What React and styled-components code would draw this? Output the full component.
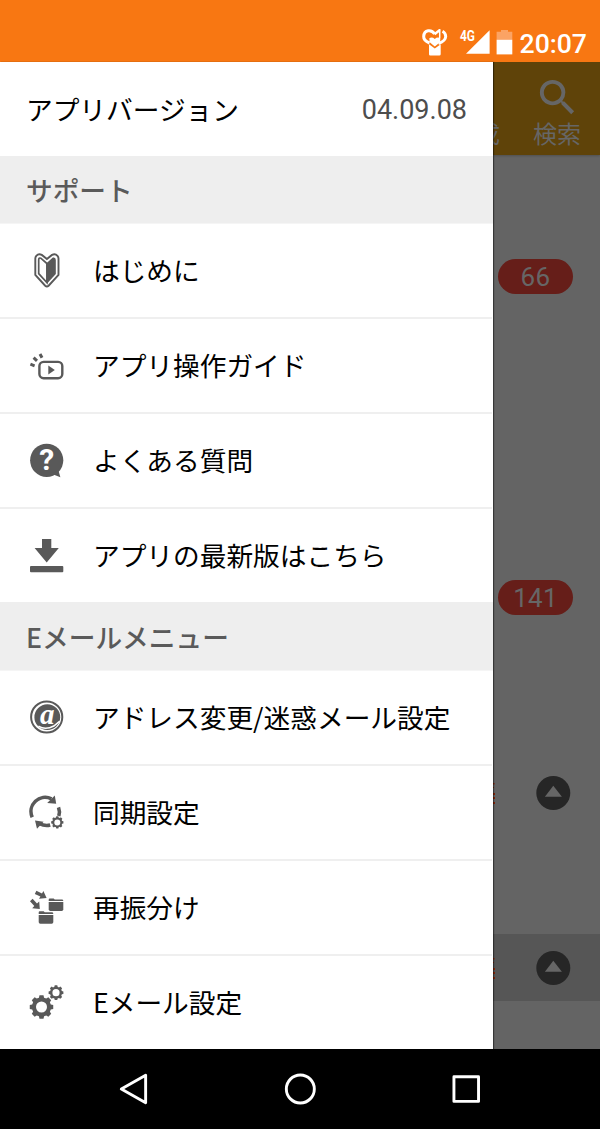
import React from 'react'
import styled, { createGlobalStyle, css } from 'styled-components'
import { MdSearch } from 'react-icons/md'

const GlobalStyle = createGlobalStyle`
  body {
    margin: 0;
    background: #000;
    font-family: "Noto Sans CJK JP", "Noto Sans", sans-serif;
  }
`

const Phone = styled.div`
  width: 600px;
  height: 1129px;
  display: flex;
  flex-direction: column;
  overflow: hidden;
`

const StatusBar = styled.header`
  height: 62px;
  flex: none;
  box-sizing: border-box;
  display: flex;
  justify-content: flex-end;
  align-items: flex-end;
  padding: 0 13px 4px 0;
  background: #f87712;
`

const Clock = styled.div`
  margin-left: 7px;
  font-family: Roboto, sans-serif;
  font-weight: 500;
  font-size: 26.6px;
  line-height: 28px;
  color: #fff;
`

const Main = styled.div`
  display: flex;
  height: 987px;
  flex: none;
`

const Drawer = styled.nav`
  width: 493px;
  flex: none;
  position: relative;
  background: #fff;
  box-shadow: 1px 0 1px rgba(0, 0, 0, 0.45);
`

const Version = styled.div`
  height: 92px;
  display: flex;
  align-items: center;
  justify-content: space-between;
  padding: 0 26px 2px;
  font-size: 26.7px;
  color: #000;
`

const VersionNumber = styled.span`
  font-family: Roboto, sans-serif;
  font-size: 27px;
  padding-top: 4px;
  color: #4d4d4d;
`

const SectionTitle = styled.div`
  box-sizing: border-box;
  height: ${({ tall }) => (tall ? 69 : 68)}px;
  display: flex;
  align-items: center;
  padding: 0 26px;
  border-bottom: 1px solid #f5f5f5;
  background: #eee;
  font-size: 26.7px;
  font-weight: 500;
  color: #5a5a5a;
`

const Item = styled.div`
  height: 93px;
  display: flex;
  align-items: center;
  gap: 27px;
  padding-left: 29px;
  margin-right: 1px;
  font-size: 26.7px;
  line-height: 40px;
  white-space: nowrap;
  color: #000;

  & + & {
    border-top: 2px solid #efefef;
  }

  svg {
    flex: none;
  }

  span {
    padding-bottom: 1px;
  }
`

const Backdrop = styled.div`
  flex-grow: 1;
  overflow: hidden;
  background: #646464;
  font-family: Roboto, "Noto Sans CJK JP", sans-serif;
  color: #666;
`

const Toolbar = styled.div`
  height: 93px;
  margin-bottom: 1px;
  display: flex;
  align-items: flex-end;
  background: #5f4309;
  box-shadow: 0 1px 2px rgba(0, 0, 0, 0.2);
  font-size: 24px;
  line-height: 36px;
`

const ToolLabel = styled.div`
  width: 7px;
  display: flex;
  justify-content: flex-end;
  overflow: hidden;
  margin-bottom: 2px;
  white-space: nowrap;
`

const Tool = styled.div`
  margin-left: 33px;
  margin-bottom: 2px;
  display: flex;
  flex-direction: column;
  align-items: center;
  white-space: nowrap;

  svg {
    margin-bottom: -4px;
  }
`

const Folder = styled.div`
  height: ${({ size }) => size}px;
  margin-bottom: ${({ gap }) => gap || 0}px;
  display: flex;
  align-items: center;
  padding-left: 5px;
`

const Badge = styled.div`
  width: 75px;
  height: 35px;
  border-radius: 18px;
  background: #661e19;
  font-size: 26px;
  line-height: 37px;
  letter-spacing: 0.3px;
  text-align: center;
`

const Message = styled.div`
  height: 67px;
  display: flex;
  align-items: center;
  justify-content: space-between;
  padding-right: 29px;

  ${({ shaded }) => shaded && css`
    margin-top: 108px;
    background: #565656;
  `}
`

const NavBar = styled.footer`
  flex-grow: 1;
  display: flex;
  align-items: center;
  padding: 0 50px;
  background: #000;

  svg {
    flex: 1;
  }
`

const GRAY = '#595959'

const Icon = ({ children }) => (
  <svg width="37" height="37" viewBox="0 0 37 37" fill={GRAY}>{children}</svg>
)

const gearPath = (cx, cy, r, hole) => {
  const inner = r * 0.81
  const points = []
  for (let i = 0; i < 8; i += 1) {
    const mid = (i * Math.PI) / 4
    ;[[-0.27, inner], [-0.17, r], [0.17, r], [0.27, inner]].forEach(([da, rad]) => {
      const x = cx + rad * Math.sin(mid + da)
      const y = cy - rad * Math.cos(mid + da)
      points.push(`${x.toFixed(2)} ${y.toFixed(2)}`)
    })
  }
  return `M${points.join('L')}Z M${cx - hole} ${cy}a${hole} ${hole} 0 1 0 ${hole * 2} 0a${hole} ${hole} 0 1 0 ${-hole * 2} 0Z`
}

const Gear = ({ cx, cy, r, hole }) => <path fillRule="evenodd" d={gearPath(cx, cy, r, hole)} />

const BeginnerIcon = () => (
  <Icon>
    <path
      d="M17.9 7 12.8 2.9Q9.6 1.3 7.3 3.8 6.3 5 6.3 6.5V23L16.2 33.7Q17.9 35.2 19.6 33.7L29.5 23V6.5Q29.5 5 28.5 3.8 26.2 1.3 23 2.9Z"
      fill="none"
      stroke={GRAY}
      strokeWidth="1.9"
    />
    <path d="M17.9 11.5 11.8 6.2Q9.7 5.4 9.7 8V21.7L17.9 30.6Z" fill="none" stroke={GRAY} strokeWidth="1.7" />
    <path d="M17.2 11.6 23.8 5.6Q26.8 4.8 26.8 8V22L17.9 31.7Z" />
  </Icon>
)

const GuideIcon = () => (
  <Icon>
    <rect x="10.4" y="14.9" width="22.9" height="16.3" rx="4.2" fill="none" stroke={GRAY} strokeWidth="2.4" />
    <path d="M19.3 18.6V27.4L25.8 23Z" />
    <path d="M1.4 17.2 5.6 18.8M4.6 10.6 8 13.8M11 7 13 10.8" stroke={GRAY} strokeWidth="3" />
  </Icon>
)

const FaqIcon = () => (
  <Icon>
    <circle cx="17.7" cy="18.3" r="16.6" />
    <path d="M23 32 31.4 35.2 29.3 28Z" />
    <text x="17.8" y="28.4" fontFamily="Roboto, sans-serif" fontWeight="700" fontSize="30" fill="#fff" textAnchor="middle">?</text>
  </Icon>
)

const DownloadIcon = () => (
  <Icon>
    <path d="M13 1.9H22.3V11H29.8L17.7 25.6 5.6 11H13Z" />
    <rect x="1" y="29" width="33.3" height="6.3" rx="1" />
  </Icon>
)

const AddressIcon = () => (
  <Icon>
    <circle cx="17.7" cy="18" r="15.6" fill="none" stroke={GRAY} strokeWidth="2" />
    <circle cx="18.3" cy="18.2" r="12.9" />
    <path d="M9.4 27.2Q16.5 31.6 24.8 27L30.8 22.2" fill="none" stroke="#fff" strokeWidth="1.5" />
    <text x="18.3" y="24.6" fontFamily="'Liberation Serif', serif" fontWeight="700" fontStyle="italic" fontSize="29" fill="#fff" textAnchor="middle">a</text>
  </Icon>
)

const SyncIcon = () => (
  <Icon>
    <g fill="none" stroke={GRAY} strokeWidth="3.6">
      <path d="M3.2 23.2A14.2 14.2 0 0 1 22.5 4.8" />
      <path d="M29.5 13.3Q31.2 17.6 29.8 22" />
      <path d="M21.2 31Q16 32.4 10.5 29.6" />
    </g>
    <path d="M25.8 1.4 27.2 9.8 18.2 8.9Z" />
    <path d="M6 26.6 14.6 27.8 8 34.8Z" />
    <Gear cx={28.3} cy={28.4} r={6.2} hole={3} />
  </Icon>
)

const FolderShape = ({ x, y }) => (
  <g transform={`translate(${x} ${y})`}>
    <path d="M0 1.2Q0 0 1 0H5L6 1H13.6Q14.6 1 14.6 2.6H0Z" />
    <path d="M0 3.6H14.6V10.8Q14.6 12.4 13 12.4H1.6Q0 12.4 0 10.8Z" />
  </g>
)

const SortIcon = () => (
  <Icon>
    <FolderShape x={19.7} y={9.5} />
    <FolderShape x={9.7} y={22.3} />
    <path d="M7.4 1.7 13 4.4 14.4 2 17.6 9 10 9.8 11.4 7.5 5.8 5Z" />
    <path d="M3.6 9.7 8 14.4 10.2 12.6 10.8 20 3.2 19.2 5.3 17 1 12.3Z" />
  </Icon>
)

const SettingsIcon = () => (
  <Icon>
    <Gear cx={12.5} cy={23} r={11.9} hole={5.5} />
    <Gear cx={27} cy={8.7} r={7.5} hole={3.6} />
  </Icon>
)

const StatusIcons = () => (
  <svg width="92" height="30" viewBox="421 28 92 30">
    <g fill="none" stroke="#fff" strokeWidth="3">
      <path d="M429.5 43Q423.5 40.5 423.7 36.5C424 29.5 431.5 29 434.7 34" />
      <path d="M438.5 43.5Q445.5 41 445.7 36.5 445.6 33 442.5 31.3" />
      <path d="M434.5 34.3 439.8 30" strokeWidth="2.4" />
    </g>
    <path d="M429.3 38.2Q432 36.6 434.8 39 437.3 36.7 440.4 38.2L440 42.2 434.8 46.6 429.7 42.2Z" fill="#fff" />
    <path d="M439.7 29V38" stroke="#fff" strokeWidth="1.5" />
    <path d="M429 44.3 434.8 48.6 440.7 44.3V54.2Q440.7 55.6 439.3 55.6H430.3Q429 55.6 429 54.2Z" fill="#fff" />
    <path d="M466 53.7H489.6V30.2Z" fill="#fff" />
    <text x="460" y="41.2" fontFamily="Roboto, sans-serif" fontWeight="700" fontSize="14" textLength="15" lengthAdjust="spacingAndGlyphs" fill="#fff">4G</text>
    <path d="M496.6 31.8H501V30H508V31.8H512.3V40H496.6Z" fill="#fba364" />
    <rect x="496.6" y="39.8" width="15.7" height="14.6" fill="#fff" />
  </svg>
)

const TopIcon = () => (
  <svg width="36" height="36" viewBox="0 0 36 36">
    <circle cx="18.3" cy="18" r="17" fill="#262626" />
    <path d="M18.3 10.7 26.9 21.8H9.9Z" fill="#666" />
  </svg>
)

const ClippedMark = () => (
  <svg width="3" height="24" viewBox="0 0 3 24" fill="#8a2508">
    <rect y="2" width="1.5" height="1.5" />
    <rect y="6" width="1" height="1" />
    <rect y="12" width="2" height="2" />
    <rect y="16" width="2" height="2" />
    <rect y="21" width="2" height="2" />
  </svg>
)

const support = [
  { Glyph: BeginnerIcon, label: 'はじめに' },
  { Glyph: GuideIcon, label: 'アプリ操作ガイド' },
  { Glyph: FaqIcon, label: 'よくある質問' },
  { Glyph: DownloadIcon, label: 'アプリの最新版はこちら' },
]

const mailMenu = [
  { Glyph: AddressIcon, label: 'アドレス変更/迷惑メール設定' },
  { Glyph: SyncIcon, label: '同期設定' },
  { Glyph: SortIcon, label: '再振分け' },
  { Glyph: SettingsIcon, label: 'Eメール設定' },
]

const renderItem = ({ Glyph, label }) => (
  <Item key={label}>
    <Glyph />
    <span>{label}</span>
  </Item>
)

const App = () => (
  <Phone>
    <GlobalStyle />
    <StatusBar>
      <StatusIcons />
      <Clock>20:07</Clock>
    </StatusBar>
    <Main>
      <Drawer>
        <Version>
          アプリバージョン
          <VersionNumber>04.09.08</VersionNumber>
        </Version>
        <SectionTitle>サポート</SectionTitle>
        {support.map(renderItem)}
        <SectionTitle tall>Eメールメニュー</SectionTitle>
        {mailMenu.map(renderItem)}
      </Drawer>
      <Backdrop>
        <Toolbar>
          <ToolLabel>成</ToolLabel>
          <Tool>
            <MdSearch size={47} />
            検索
          </Tool>
        </Toolbar>
        <Folder size={240} gap={40}><Badge>66</Badge></Folder>
        <Folder size={323}><Badge>141</Badge></Folder>
        <Message>
          <ClippedMark />
          <TopIcon />
        </Message>
        <Message shaded>
          <ClippedMark />
          <TopIcon />
        </Message>
      </Backdrop>
    </Main>
    <NavBar>
      <svg width="34" height="34" viewBox="0 0 34 34" fill="none" stroke="#fff" strokeWidth="2.9" strokeLinejoin="round">
        <path d="M5 17 29.3 3.2V30.8Z" />
      </svg>
      <svg width="34" height="34" viewBox="0 0 34 34" fill="none" stroke="#fff" strokeWidth="2.9">
        <circle cx="17" cy="17" r="14" />
      </svg>
      <svg width="34" height="34" viewBox="0 0 34 34" fill="none" stroke="#fff" strokeWidth="2.9" strokeLinejoin="round">
        <rect x="4.6" y="4.8" width="24.6" height="24.6" />
      </svg>
    </NavBar>
  </Phone>
)

export default App
